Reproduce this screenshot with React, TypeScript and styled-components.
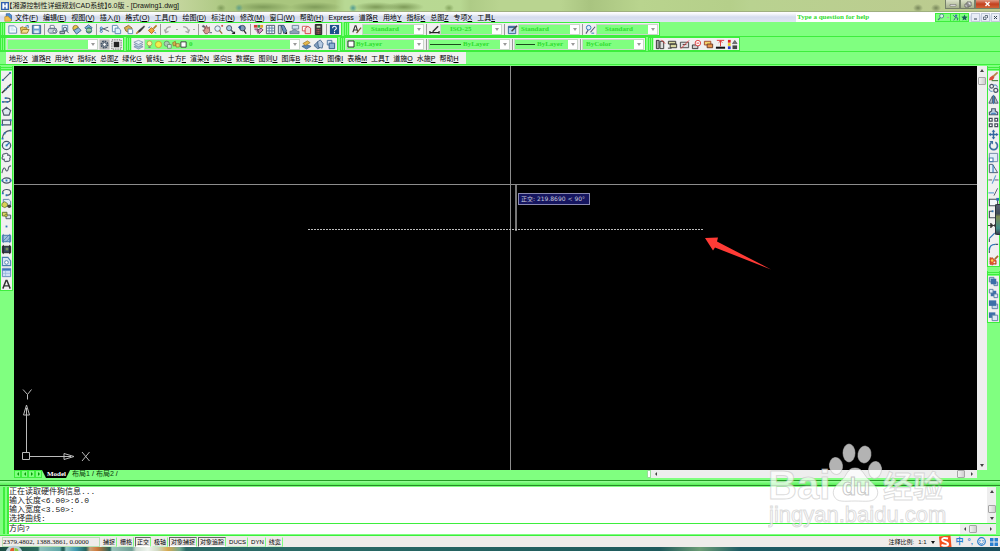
import React from 'react';
import styled, { createGlobalStyle, css } from 'styled-components';

const GREEN = '#80ff80';
const LINE = '#3dee3d';
const TEXT_GREEN = '#2fdc2f';
const PANEL = '#f0f0f0';
const SANS = '"Liberation Sans", "Noto Sans CJK SC", sans-serif';
const SERIF = '"Liberation Serif", "Noto Sans CJK SC", serif';
const MONO = '"Liberation Mono", "Noto Sans CJK SC", monospace';

const GlobalStyle = createGlobalStyle`
  * { box-sizing: border-box; }
  body { margin: 0; font-family: ${SANS}; background: ${GREEN}; }
  button, input, select { font: inherit; color: inherit; margin: 0; padding: 0; border: 0; background: none; border-radius: 0; outline: 0; }
`;

/* ---------- icons ---------- */

const S = '#4a5568';
const B = '#2f74b5';

const icons: Record<string, React.ReactNode> = {
  new: <><path d="M2 2h6l2.500 2.500V10H2z" fill="#f4faff" stroke="#5a87b0" /><path d="M4 4.500h3M4 6.500h5" stroke="#b8d4ec" /></>,
  open: <><path d="M1.500 4l3-1 1 1h3v5h-6z" fill="#e8c35a" stroke="#9c7a2b" /><path d="M2 10l2-4h7l-2 4z" fill="#f7dd8a" stroke="#9c7a2b" /><path d="M7 2.500l3-1v3" fill="none" stroke={B} /></>,
  save: <><path d="M1.500 1.500h9v9h-9z" fill="#6f9fd0" stroke="#3c618c" /><path d="M3.500 2h5v3h-5z" fill="#fff" /><path d="M3.500 7h5v3h-5z" fill="#dfe9f3" /></>,
  print: <><path d="M3.500 1.500h4l1 3h-5z" fill="#fff" stroke="#6f7d92" /><path d="M2 5h8l1 3-1 2H3L1 8z" fill="#c6cfdd" stroke="#5f6b84" /><circle cx="8" cy="8" r="1.500" fill="#fff" stroke="#5f6b84" /></>,
  preview: <><path d="M3.500 1.500h6v6h-6z" fill="#eef6ff" stroke="#5a87b0" /><path d="M1 8h5v2.500H1z" fill="#aab4c4" stroke={S} /><circle cx="6.500" cy="5.500" r="2" fill="#cfe4f7" stroke={S} /><path d="M8 7l2.500 3" stroke={S} /></>,
  publish: <><circle cx="5" cy="4.500" r="3" fill="#e9c04c" stroke="#8b7430" /><path d="M3 7l5-3 3 3-5 4z" fill="#8fb7dc" stroke="#3d6287" /></>,
  globe: <><path d="M2 4l4-3 4 3-4 4z" fill="#7fb3dc" stroke="#3d6287" /><circle cx="6.500" cy="7" r="3" fill="#6fae66" stroke="#2f6a88" /><path d="M4 6.500h5" stroke="#d6edff" /></>,
  cut: <><path d="M1 6.500l9-3M4 5l7 3" stroke={S} /><circle cx="2.500" cy="4.500" r="1.200" fill="none" stroke={B} /><circle cx="2.500" cy="8" r="1.200" fill="none" stroke={B} /></>,
  copy: <><path d="M1.500 1.500h5l1 1v6h-6z" fill="#f4faff" stroke="#5a87b0" /><path d="M4.500 4.500h4l2 2v4h-6z" fill="#e0effc" stroke="#5a87b0" /></>,
  paste: <><path d="M1.500 4L6 1.500l4 3-3 5-4-2z" fill="#d9ad53" stroke="#8b6b2c" /><path d="M5.500 5.500h4l1 1v4h-5z" fill="#fff" stroke="#5a87b0" /></>,
  match: <><path d="M1.500 10.500L4 7l6-5 .5 1L6 8z" fill="#333" stroke="#444" strokeWidth=".6" /><path d="M1.500 10.500L3.500 8" stroke="#c98b3a" strokeWidth="1.500" /></>,
  brush: <><path d="M10.500 1.500L7 5" stroke="#b07a2a" strokeWidth="1.800" /><path d="M5 4l3 3-3 3.500L1.500 7z" fill="#f0a93a" stroke="#b3661c" /><path d="M1.500 4l2-1M8 9l2 1" stroke={B} /></>,
  undo: <path d="M3 9.500C2 5 5 3 8.500 3M1.500 6l1.500 3.500L6 8" fill="none" stroke="#a8a8a8" strokeWidth="1.400" />,
  redo: <path d="M9 9.500C10 5 7 3 3.500 3M10.500 6L9 9.500 6 8" fill="none" stroke="#a8a8a8" strokeWidth="1.400" />,
  pan: <><path d="M4 2l1 3 1-3.500L7.500 5 9 3l.5 5L7 10.500H4.500L2 6.500l2 .5z" fill="#d99a92" stroke="#7b4a4a" strokeWidth=".8" /><path d="M1 2.500h3M2.500 1v3M9 9.500h3" stroke={S} /></>,
  zoomrt: <><circle cx="5" cy="5" r="3" fill="#e2f0fb" stroke="#66758a" /><path d="M7 7l3 3.500" stroke="#9a6b35" strokeWidth="1.500" /><path d="M9 2h2M10 1v2" stroke="#b33" /></>,
  zoomwin: <><circle cx="4.500" cy="4.500" r="2.800" fill="#a8c7e4" stroke={S} /><path d="M6.500 6.500l3 3" stroke={S} strokeWidth="1.600" /><path d="M7 11h4V8z" fill="#222" /></>,
  zoomprev: <><circle cx="6" cy="4.500" r="3" fill="#7d97b8" stroke="#38455c" /><path d="M7.500 7l2.500 3.500" stroke="#333" strokeWidth="1.500" /><path d="M1 3.500L4 1v5z" fill="#1d4f91" /></>,
  props: <><path d="M1 1h4v3H1z" fill="#d43c3c" /><path d="M5 1h3v3H5z" fill="#2f9d48" /><path d="M8 1h3v3H8z" fill="#e3a42c" /><path d="M1.500 5.500h4v5M5 6.500l4-2 2 2-4 4z" fill="#d89ac4" stroke="#63405f" /></>,
  design: <><path d="M1.500 1.500h9v9h-9z" fill="#eef4fb" stroke={S} /><path d="M4.500 2v8M2 4.500h8M2 7.500h8M7.500 2v8" stroke="#5f7fa5" /></>,
  palette: <><path d="M1.500 1.500h3v9h-3z" fill="#c8d6e6" stroke={S} /><path d="M4.500 1.500h3l3 6-3 3z" fill="#6f93bf" stroke="#334f75" /><path d="M8 11h3V8z" fill="#222" /></>,
  sheet: <><path d="M3.500 1.500h7v4h-7z" fill="#cfdfee" stroke="#6b7f98" /><path d="M1 8c3 0 3-2 5-2s2 2 5 2v2.500H1z" fill="#8c9fb8" stroke="#56677f" strokeWidth=".7" /></>,
  markup: <><path d="M1.500 2.500h5v5h-5z" fill="#fff" stroke="#c55" /><path d="M4.500 4.500l3-2 3 2v6h-6z" fill="#f6dada" stroke="#d23f3f" /></>,
  calc: <><path d="M2.500.500h7v11h-7z" fill="#423a3a" stroke="#222" /><path d="M4 2h4v2H4z" fill="#b9d6b0" /><path d="M4 6h4M4 8h4M4 10h4" stroke="#c66" strokeDasharray="1 .6" /></>,
  help: <><path d="M1 1h10v10H1z" fill="#1d4f8c" /><path d="M4 4.500c0-3 4-2.500 4 0C8 6 6 5.800 6 7.500M6 8.500V10" fill="none" stroke="#fff" strokeWidth="1.200" /></>,
  textstyle: <><path d="M2 9L4.500 2h1L7.500 9M3 6.500h4" fill="none" stroke="#333" strokeWidth="1.200" /><path d="M6 10l5-6" stroke="#7a5c34" strokeWidth="1.400" /></>,
  dimstyle: <><path d="M1 9.500h10M1 7.500v3M11 7.500v3" stroke="#222" strokeWidth="1.300" /><path d="M4 8.500l6-6" stroke="#333" strokeWidth="1.600" /></>,
  tablestyle: <><path d="M1.500 2.500h8v8h-8z" fill="#b8d3ee" stroke="#33608f" /><path d="M1.500 3.500h8" stroke="#33608f" strokeWidth="1.500" /><path d="M5 8l6-6" stroke="#444" strokeWidth="1.600" /></>,
  leader: <><circle cx="4" cy="4" r="2.500" fill="#e2eefb" stroke={B} /><path d="M1 10.500l2.500-4M6 9l5-6" stroke="#557" strokeWidth="1.200" /><path d="M7 10h3" stroke={B} /></>,
  gear: <><path d="M.500.500h11v11H.500z" fill="#b9b9b9" /><circle cx="6" cy="6" r="3.500" fill="none" stroke="#3f5064" strokeWidth="1.800" strokeDasharray="1.800 .9" /><circle cx="6" cy="6" r="2" fill="#fff" stroke="#3f5064" /></>,
  wsave: <><path d="M1 1h10v10H1z" fill="none" stroke="#555" strokeDasharray="1.500 1" /><path d="M3 3h6v6H3z" fill="#222" /></>,
  layers: <><path d="M1 8.500l5-2 5 2-5 2.500z" fill="#a9bdd4" stroke="#6a83a2" strokeWidth=".7" /><path d="M1 6l5-2 5 2-5 2.500z" fill="#c7d6e6" stroke="#6a83a2" strokeWidth=".7" /><path d="M1 3.500l5-2 5 2L6 6z" fill="#e6eef6" stroke="#6a83a2" strokeWidth=".7" /></>,
  layerprev: <><path d="M1 8l5-2 5 2-5 3z" fill="#5b83b5" stroke="#34567f" strokeWidth=".7" /><path d="M2 5l5-3 3 2-5 3z" fill="#e8b94d" stroke="#94722a" strokeWidth=".7" /></>,
  layerstate: <><path d="M1 7l4-4 2 1v6l-2 .5z" fill="#7f9cbd" stroke="#34567f" strokeWidth=".8" /><path d="M5 3l3-2 3 4-1 5-4-1z" fill="#b7cbe1" stroke="#34567f" strokeWidth=".8" /></>,
  layeriso: <><path d="M2.500 1.500h5v5h-5z" fill="#cfe0f2" stroke="#4d759f" /><path d="M4.500 4.500h6v6h-6z" fill="#8fb1d6" stroke="#2c5687" /></>,
  bulb: <><circle cx="6" cy="4.500" r="3.300" fill="#fff59a" stroke="#a89a3a" /><path d="M4.500 8.500h3v2h-3z" fill="#777" /></>,
  sun: <circle cx="6" cy="6" r="4.200" fill="#f3ee4a" stroke="#b49c2c" />,
  vp: <><circle cx="5" cy="5" r="3.500" fill="#a9c9b2" stroke="#61816a" /><path d="M6 6h5v5H6z" fill="#d6e4d9" stroke="#61816a" /></>,
  lock: <><path d="M1 4l4-2 1 6-4 1z" fill="#d8b04b" stroke="#8b6b24" /><path d="M6 5.500h5v5H6z" fill="#e9cf74" stroke="#8b6b24" /></>,
  swatch: <path d="M1.500 1.500h9v9h-9z" fill="#fff" stroke="#222" strokeWidth="1.400" />,
  t1: <><path d="M2.500 1.500v9M5.500 2.500h4v8h-4z" fill="#ddd" stroke="#333" /><path d="M1.500 1.500h3v9h-3z" fill="#aaa" stroke="#333" /><path d="M7 1l4 4" stroke="#d33" /></>,
  t2: <><path d="M1.500 2.500h8v3h-8zM3.500 5.500h7v4h-7z" fill="#d8d8a0" stroke="#333" /><path d="M1 10h4" stroke="#333" /></>,
  t3: <><path d="M1.500 3.500h9v6h-9zM4 6h4" fill="#ddd" stroke="#444" /><path d="M2 10.500l9-9" stroke="#e03a3a" /></>,
  t4: <><path d="M1.500 6.500h6v4h-6z" fill="#ccc" stroke="#333" /><circle cx="7.500" cy="4.500" r="3" fill="#fff" stroke="#d93333" /><path d="M6 4.500h3" stroke="#d33" /></>,
  t5: <><path d="M1.500 2.500h7v4h-7z" fill="#f2d36a" stroke="#a3452d" /><path d="M4.500 5.500h6v4h-6z" fill="#e8954b" stroke="#6b3a22" /></>,
  t6: <><path d="M2 1.500h8M6 2v6M4 4l2-2 2 2" stroke="#d33" fill="none" /><path d="M1 9.500h10" stroke="#111" strokeWidth="2.200" /></>,
  t7: <><path d="M1 1h3v3H1z" fill="#d22" /><path d="M1 4.500h3v3H1z" fill="#eacb22" /><path d="M1 8h3v3H1z" fill="#2237cc" /><path d="M6 5l2.500-3.500L11 5z" fill="#777" stroke="#333" strokeWidth=".6" /><path d="M6 7h5v4H6z" fill="#444" /></>,

  line: <><path d="M1.500 10.500l9-9" stroke={S} strokeWidth="1.200" /><path d="M1 9h2v2H1zM9 1h2v2H9z" fill={B} /></>,
  xline: <><path d="M1 11L11 1" stroke="#333" strokeWidth="1.600" /><path d="M4 6h2v2H4zM7 3h2v2H7z" fill={B} /></>,
  pline: <><path d="M2 8.500h5c4 0 4-4 0-4H5" fill="none" stroke={S} strokeWidth="1.300" /><path d="M1 7.500h2v2H1zM6 7.500h2v2H6zM4 3.500h2v2H4z" fill={B} /></>,
  polygon: <path d="M6 1.500l4.500 3.500-1.700 5H3.200L1.500 5z" fill="#dfe7ee" stroke={S} strokeWidth="1.300" />,
  rect: <><path d="M1.500 3.500h9v5h-9z" fill="#e8eef4" stroke={S} strokeWidth="1.300" /><path d="M.500 7.500h2v2h-2zM9.500 2.500h2v2h-2z" fill={B} /></>,
  arc: <><path d="M1.500 10.500C2 5 5 2 10.500 1.500" fill="none" stroke={S} strokeWidth="1.300" /><path d="M.700 9.500h2v2h-2zM3 3.700h2v2H3zM9.500.700h2v2h-2z" fill={B} /></>,
  circle: <><circle cx="6" cy="6" r="4.500" fill="#eaf1f8" stroke={S} strokeWidth="1.400" /><path d="M6 6l3-3" stroke={B} strokeWidth="1.200" /><path d="M5 5h2v2H5z" fill={B} /></>,
  cloud: <path d="M4 2c2-1.500 4 0 3.500 1.500C10 3 11 5.500 9.500 7c1 2-1 4-3 3C5 11 3 10 3.500 8 1 8.500.500 6 2 5 1 3.500 2.500 1.500 4 2z" fill="#f1f4f7" stroke="#5b6472" strokeWidth="1.300" />,
  spline: <path d="M1 10c1-6 3-7 4-4s3 1 3-1 1-3 3-3" fill="none" stroke="#5b6472" strokeWidth="1.200" />,
  ellipse: <><ellipse cx="6" cy="6" rx="4.500" ry="2.800" fill="#eaf1f8" stroke={S} strokeWidth="1.300" /><path d="M.500 5h2v2h-2zM9.500 5h2v2h-2zM5 5h2v2H5z" fill={B} /></>,
  earc: <><path d="M2 7C0 2 11 1 10.500 6c0 2-2 3-4.500 3" fill="none" stroke={S} strokeWidth="1.300" /><path d="M1 6h2v2H1zM5 8h2v2H5z" fill={B} /></>,
  insert: <><path d="M2.500 1.500h6l2 2v5h-8z" fill="#dfeaf5" stroke="#5c7ea3" /><path d="M1 6l3-2 3 2v3l-3 1.500L1 9z" fill="#d9cf58" stroke="#5d6b2d" strokeWidth=".8" /><circle cx="9" cy="9" r="2" fill="#444" /></>,
  block: <><path d="M1.500 2.500h5v4h-5z" fill="#dcd467" stroke="#5d6b2d" /><path d="M5.500 5.500h5v4h-5z" fill="#d8dee6" stroke={S} /><circle cx="5.500" cy="6" r="1.500" fill="#c8be45" stroke="#5d6b2d" strokeWidth=".6" /></>,
  point: <path d="M5 5h2v2H5z" fill={B} />,
  hatch: <><path d="M1.500 2.500h9v7h-9z" fill="#9fbfdd" stroke="#3f74a8" /><path d="M2 9l7-7M5 10l5-5M2.500 1v10M9.500 1v10" stroke="#3f74a8" strokeWidth=".8" /></>,
  gradient: <><path d="M1.500 2.500h9v7h-9z" fill="#34435c" stroke="#222" /><path d="M2.500 1v10M9.500 1v10" stroke="#222" /><path d="M5 4h3v3H5z" fill="#7a8a5a" /></>,
  region: <><path d="M1.500 1.500h6l3 4v5h-9z" fill="#d5e5f4" stroke="#4d7eae" strokeWidth="1.200" /><circle cx="6" cy="7" r="2" fill="#fff" stroke="#4d7eae" /></>,
  table: <><path d="M1.500 1.500h9v9h-9z" fill="#cfe0f5" stroke="#5e86b8" /><path d="M1.500 2h9v2h-9z" fill="#3e74bd" /><path d="M2 7h8M5 4v6" stroke="#8fb0da" strokeWidth=".7" /></>,
  mtext: <path d="M2 10.500L5.500 1.500h1L10 10.500M3.500 7.500h5" fill="none" stroke="#333" strokeWidth="1.600" />,

  erase: <><path d="M5 6.500l5.500-5" stroke="#b58a4c" strokeWidth="2" /><path d="M2 7l3-2 2 2-2 3H1z" fill="#d9503c" /><path d="M4 10.500h7" stroke="#467a3c" strokeWidth="1.200" /></>,
  copyobj: <><circle cx="4" cy="3.500" r="2" fill="none" stroke={S} strokeWidth="1.300" /><circle cx="8.500" cy="8" r="2.200" fill="none" stroke={S} strokeWidth="1.300" /><path d="M1 6c1 4 3 3 4 3M6 2.500c4-1 4 1 4 2.500" fill="none" stroke={B} /></>,
  mirror: <><path d="M5 2v8H1zM7 2v8h4z" fill="#aebccc" stroke={S} /><path d="M6 1v10" stroke={B} /></>,
  offset: <><path d="M1.500 9.500V7L4 5.500V3h4v2.500L10.500 7v2.500z" fill="#b9cbe0" stroke={S} strokeWidth="1.200" /><path d="M4 9.500V8h4v1.500" stroke={B} fill="none" /></>,
  array: <path d="M1.500 1.500h3v3h-3zM7.500 1.500h3v3h-3zM1.500 7.500h3v3h-3zM7.500 7.500h3v3h-3z" fill="#fff" stroke="#444c5a" strokeWidth="1.300" />,
  move: <path d="M6 .500l2 2.500H6.800v2.200H9V4l2.500 2L9 8V6.800H6.800V9H8l-2 2.500L4 9h1.200V6.800H3V8L.500 6 3 4v1.200h2.200V3H4z" fill="#3568a0" />,
  rotate: <><path d="M3.500 3A4.200 4.200 0 1 0 8 2.500" fill="none" stroke="#3f6f9f" strokeWidth="1.800" /><path d="M1.500 1h4v4z" fill="#3f6f9f" /></>,
  scale: <><path d="M1.500 1.500h9v9h-9z" fill="#e3edf7" stroke="#7088a3" /><path d="M1.500 6.500h4v4h-4z" fill="#fff" stroke="#4d7eae" strokeWidth="1.200" /></>,
  stretch: <><path d="M1.500 1.500H5l5.500 9h-9z" fill="#e3edf7" stroke={S} /><path d="M5.500 2v8.500" stroke={B} strokeWidth="1.200" /></>,
  trim: <><path d="M.500 6.500h4M7 6.500h4.500" stroke={S} /><path d="M4.500 10.500l4-9" stroke="#5b9ad0" strokeWidth="1.200" /></>,
  extend: <><path d="M.500 7.500h6" stroke="#5b9ad0" strokeWidth="1.200" /><path d="M6.500 10.500l4-8" stroke={S} /></>,
  breakpt: <><path d="M1.500 2.500h9v7h-9z" fill="#f3f6fa" stroke="#444c5a" strokeWidth="1.200" /><path d="M9 1h3v3H9z" fill={B} /></>,
  break: <><path d="M5 2.500H1.500v7H8M8.500 2.500h2v3" fill="none" stroke="#444c5a" strokeWidth="1.200" /><path d="M4 1.500h2v2H4z" fill={B} /></>,
  join: <path d="M0 6h12M3 3.500L5.500 6 3 8.500zM9 3.500L6.500 6 9 8.500z" fill="#333" stroke="#333" />,
  chamfer: <><path d="M1.500 11V7M7 1.500h4" stroke={S} strokeWidth="1.200" /><path d="M1.500 7L7 1.500" stroke={B} strokeWidth="1.400" /></>,
  fillet: <><path d="M1.500 11V8M8 1.500h3" stroke={S} strokeWidth="1.200" /><path d="M1.500 8c0-4 2-6.500 6.500-6.500" fill="none" stroke={B} strokeWidth="1.400" /></>,
  explode: <><path d="M11 1L7.500 4.500" stroke="#a56b2a" strokeWidth="1.800" /><path d="M2 3h3l1 1 3 2v4H6l-1 1-3-1z" fill="#e0562e" stroke="#8c3a1c" strokeWidth=".6" strokeDasharray="1.500 .5" /><circle cx="4.500" cy="6" r="1.300" fill="#f7d24a" /><circle cx="7" cy="8" r="1" fill="#f2ede2" /></>,
  front: <><path d="M1.500 1.500h5v5h-5zM6.500 6.500h4v4h-4z" fill="#b8cde3" stroke="#5c7ea3" /><path d="M3 3h6v6H3z" fill="#3c6fa8" /></>,
  back: <><path d="M3 3h6v6H3z" fill="#3c6fa8" /><path d="M1.500 1.500h4v4h-4zM6.500 6.500h4v4h-4z" fill="#dce8f4" stroke="#5c7ea3" /></>,
  above: <><path d="M4.500 5.500h6v5h-6z" fill="#c7d8ea" stroke="#5c7ea3" /><path d="M1 1.500h8v6H1z" fill="#3c6fa8" /></>,
  under: <><path d="M1 1.500h7v6H1z" fill="#3c6fa8" /><path d="M4.500 4.500h6v6h-6z" fill="#dce8f4" stroke="#5c7ea3" /></>,

  search: <><circle cx="7" cy="4.500" r="3" fill="#d8f2e4" stroke="#3f7f7f" strokeWidth="1.200" /><path d="M5 7l-3.500 3.500" stroke="#3f7f7f" strokeWidth="1.600" /></>,
  comm: <><circle cx="7" cy="3" r="2" fill="#3f6fae" /><path d="M2 2l4 4-3 5M6 6l4 1-1 4" stroke="#2f5f7f" strokeWidth="1.500" fill="none" /></>,
  star: <path d="M6 .800l1.600 3.500 3.900.400-2.900 2.600.800 3.900L6 9.200l-3.400 2 .8-3.900L.500 4.700l3.900-.400z" fill="#17605a" />,
  app: <><path d="M0 0h12v12H0z" fill="#2f5fae" /><path d="M2 2h3v3h2V2h3v8H7V7H5v3H2z" fill="#fff" /></>,
  dwg: <><path d="M3 1h5l2 2v7H3z" fill="#4f8fcf" stroke="#2f5f9a" /><path d="M1 5l4-1 5 5-1 2H1z" fill="#f2c04a" stroke="#a87a22" strokeWidth=".7" /></>,
};

const Glyph = styled.svg`
  display: block;
  flex: none;
`;

const Icon = ({ name, size = 11 }: { name: string; size?: number }) => (
  <Glyph width={size} height={size} viewBox="0 0 12 12" aria-hidden="true">{icons[name]}</Glyph>
);

/* ---------- shell ---------- */

const Shell = styled.div`
  position: relative;
  display: flex;
  flex-direction: column;
  height: 100vh;
  overflow: hidden;
  background: ${GREEN};
`;

const TitleBar = styled.header`
  display: flex;
  align-items: center;
  height: 12px;
  flex: none;
  padding-left: 1px;
  border-bottom: 1px solid #9fb080;
  background:
    radial-gradient(4px 4px at 239px 8px, #5fa08a, transparent),
    radial-gradient(4px 4px at 353px 8px, #4f9a92, transparent),
    radial-gradient(30px 5px at 263px 7px, #7f9c5a, transparent),
    radial-gradient(26px 5px at 315px 7px, #7f9c5a, transparent),
    radial-gradient(22px 5px at 376px 7px, #7d9a58, transparent),
    radial-gradient(20px 5px at 404px 7px, #7d9a58, transparent),
    radial-gradient(5px 4px at 221px 8px, #7f9c5a, transparent),
    radial-gradient(5px 4px at 449px 8px, #86a660, transparent),
    radial-gradient(5px 4px at 918px 8px, #77865a, transparent),
    radial-gradient(5px 4px at 936px 8px, #77865a, transparent),
    linear-gradient(90deg, #dfe6c8 0, #d9e2bd 80px, #c3d59c 180px, #a9c67e 232px, #a9c67e 335px, #b8d994 345px, #b8d892 460px, #aecb86 470px, #b9d490 500px, #b9d490 560px, #a9c480 590px, #b9d48e 640px, #b5cf8a 730px, #b9d290 75%, #bcc98f 100%);
`;

const Title = styled.h1`
  flex: 1;
  margin: 0;
  font-size: 7px;
  font-weight: 400;
  line-height: 10px;
  color: #111;
  white-space: nowrap;
  font-feature-settings: 'halt';
`;

const WindowButtons = styled.div`
  display: flex;
  align-self: flex-start;
  height: 9px;
`;

const WinButton = styled.button<{ $close?: boolean }>`
  display: grid;
  place-items: center;
  width: ${p => (p.$close ? 25 : 15)}px;
  border: 1px solid #75806a;
  border-top: 0;
  background: ${p => (p.$close ? 'linear-gradient(#e09a82, #c3401f 50%, #cf6436)' : 'linear-gradient(#dbe2c8, #a5b08c)')};
`;

const MenuBar = styled.nav`
  display: flex;
  align-items: center;
  flex: none;
  height: 10px;
  padding-left: 4px;
  background: linear-gradient(#fff, #f4f6fb 20%, #d5dcee 50%, #dfe5f3);
`;

const Menus = styled.div`
  display: flex;
  flex: 1;
  gap: 5px;
  padding-left: 2px;
`;

const MenuButton = styled.button`
  font-size: 7px;
  line-height: 9px;
  color: #000;
  white-space: nowrap;
`;

const HelpBox = styled.input`
  width: 139px;
  height: 9px;
  padding-left: 1px;
  background: #fff;
  font-family: ${SERIF};
  font-size: 7px;
  font-weight: 700;
  &::placeholder { color: ${TEXT_GREEN}; opacity: 1; }
`;

const HelpTools = styled.div`
  display: flex;
  height: 9px;
  margin-right: 1px;
  border: 1px solid ${LINE};
  background: ${GREEN};
`;

const HelpButton = styled.button<{ $wide?: boolean }>`
  display: flex;
  align-items: center;
  justify-content: space-evenly;
  width: ${p => (p.$wide ? 14 : 9)}px;
  & + & { border-left: 1px solid ${LINE}; }
`;

const DocButton = styled.button`
  display: grid;
  place-items: center;
  width: 9px;
  height: 9px;
  margin-left: 1px;
  border: 1px solid #c3cbdc;
  background: #e9edf6;
`;

/* ---------- toolbars ---------- */

const ToolRow = styled.div<{ $height: number }>`
  display: flex;
  flex: none;
  gap: 2px;
  height: ${p => p.$height}px;
  border-bottom: 1px solid ${LINE};
`;

const Toolbar = styled.div`
  display: flex;
  align-items: center;
  padding-right: 1px;
  background: ${PANEL};
  border: 1px solid ${LINE};
`;

const Grip = styled.span<{ $wide?: boolean }>`
  align-self: stretch;
  width: ${p => (p.$wide ? 6 : 5)}px;
  flex: none;
  border-left: 1px solid ${GREEN};
  border-right: 1px solid #b9ffb9;
  background: linear-gradient(90deg, ${LINE} 1px, ${GREEN} 1px 2px, ${LINE} 2px 3px, ${GREEN} 3px);
`;

const ToolButton = styled.button<{ $narrow?: boolean }>`
  display: grid;
  place-items: center;
  flex: none;
  width: ${p => (p.$narrow ? 5 : 12)}px;
  height: 12px;
`;

const Divider = styled.span`
  flex: none;
  width: 1px;
  height: 11px;
  margin: 0 1px 0 2px;
  background: #9a9a9a;
`;

const Dot = styled.i`
  width: 2px;
  height: 1px;
  background: #aaa;
`;

const Combo = styled.div<{ $width: number }>`
  position: relative;
  display: flex;
  align-items: center;
  flex: none;
  width: ${p => p.$width}px;
  height: 11px;
  border: 1px solid #c9d6c9;
  background: ${GREEN};
`;

const ComboSelect = styled.select<{ $indent: number }>`
  appearance: none;
  flex: 1;
  min-width: 0;
  height: 9px;
  padding-left: ${p => p.$indent}px;
  font-family: ${SERIF};
  font-size: 7px;
  font-weight: 700;
  line-height: 9px;
  color: ${TEXT_GREEN};
`;

const ComboArrow = styled.span`
  display: grid;
  place-items: center;
  flex: none;
  width: 9px;
  height: 9px;
  background: #fff;
`;

const Sample = styled.span<{ $width: number }>`
  flex: none;
  width: ${p => p.$width}px;
  height: 1px;
  margin-left: 1px;
  background: #1c4b1c;
`;

const Arrow = ({ dir = 'down', color = '#444' }: { dir?: 'down' | 'up' | 'left' | 'right'; color?: string }) => {
  const d = { down: 'M0 1h4L2 4z', up: 'M0 3h4L2 0z', left: 'M3 0v4L1 2z', right: 'M1 0v4l2-2z' }[dir];
  return <Glyph width="4" height="4" viewBox="0 0 4 4"><path d={d} fill={color} /></Glyph>;
};

type ComboProps = { label: string; value?: string; width: number; indent?: number; children?: React.ReactNode };

const ComboBox = ({ label, value = '', width, indent = 2, children }: ComboProps) => (
  <Combo $width={width}>
    {children}
    <ComboSelect aria-label={label} $indent={indent} defaultValue={value}>
      <option>{value}</option>
    </ComboSelect>
    <ComboArrow><Arrow color="#999" /></ComboArrow>
  </Combo>
);

const Tools = ({ names }: { names: string[] }) => (
  <>
    {names.map((n, i) => {
      if (n === '|') return <Divider key={i} />;
      if (n === '.') return <ToolButton key={i} $narrow aria-label="more"><Dot /></ToolButton>;
      return <ToolButton key={i} aria-label={n}><Icon name={n} /></ToolButton>;
    })}
  </>
);

const PlanMenu = styled.nav`
  display: flex;
  align-items: center;
  gap: 4px;
  margin-left: 6px;
  padding: 0 8px 0 3px;
  background: ${PANEL};
`;

/* ---------- work area ---------- */

const WorkArea = styled.main`
  display: flex;
  flex: 1;
  min-height: 0;
  padding-top: 1px;
`;

const SideColumn = styled.aside<{ $width: number }>`
  flex: none;
  width: ${p => p.$width}px;
`;

const SideBar = styled.div<{ $height: number }>`
  display: flex;
  flex-direction: column;
  width: 13px;
  height: ${p => p.$height}px;
  margin-bottom: 4px;
  border: 1px solid ${LINE};
  border-top: 0;
  background: ${PANEL};
`;

const SideGrip = styled.span`
  flex: none;
  height: 5px;
  background: linear-gradient(${GREEN} 1px, ${LINE} 1px 2px, ${GREEN} 2px 3px, ${LINE} 3px 4px, ${GREEN} 4px);
`;

const SideButton = styled.button`
  display: grid;
  place-items: center;
  flex: 1;
  min-height: 0;
`;

const Center = styled.section`
  display: flex;
  flex: 1;
  flex-direction: column;
  min-width: 0;
`;

const DrawingRow = styled.div`
  display: flex;
  flex: 1;
  min-height: 0;
`;

const Canvas = styled.div`
  position: relative;
  flex: 1;
  background: #000;
  overflow: hidden;
`;

const Drawing = styled.svg`
  position: absolute;
  inset: 0;
  width: 100%;
  height: 100%;
`;

const Ucs = styled.svg`
  position: absolute;
  left: 6px;
  bottom: 6px;
`;

const Tip = styled.div`
  position: absolute;
  left: 504px;
  top: 127px;
  padding: 0 4px 0 2px;
  border: 1px solid #8a8ab0;
  background: #15155f;
  color: #c9c9dc;
  font-family: "DejaVu Sans", "Noto Sans CJK SC", sans-serif;
  font-size: 6px;
  line-height: 10px;
  white-space: nowrap;
`;

const scroll = css`
  display: flex;
  align-items: center;
  justify-content: space-between;
  flex: none;
  background: #eee;
`;

const VScroll = styled.div<{ $width: number }>`
  ${scroll}
  flex-direction: column;
  width: ${p => p.$width}px;
  padding: 3px 0;
`;

const HScroll = styled.div<{ $width?: number }>`
  ${scroll}
  ${p => (p.$width ? `width: ${p.$width}px;` : 'flex: 1;')}
  padding: 0 3px;
`;

const Thumb = styled.span`
  width: 8px;
  height: 8px;
  border: 1px solid #a5a5a5;
  border-radius: 1px;
  background: linear-gradient(90deg, #f3f3f3, #cfcfcf);
`;

const ThumbGap = styled.span<{ $grow: number }>`
  flex: ${p => p.$grow};
`;

const TabRow = styled.div`
  display: flex;
  flex: none;
  height: 8px;
  margin-bottom: 2px;
  padding-right: 10px;
  font-size: 7px;
  line-height: 8px;
`;

const TabNav = styled.button`
  display: grid;
  place-items: center;
  width: 7px;
  border: 1px solid ${LINE};
`;

const Tabs = styled.div`
  display: flex;
  width: 608px;
  flex: none;
`;

const Tab = styled.button<{ $active?: boolean }>`
  color: ${p => (p.$active ? '#fff' : '#0a3a0a')};
  background: ${p => (p.$active ? '#000' : 'none')};
  clip-path: ${p => (p.$active ? 'polygon(0 0, 100% 0, calc(100% - 4px) 100%, 4px 100%)' : 'none')};
  padding: ${p => (p.$active ? '0 4px 0 5px' : '0 2px')};
  font-family: ${p => (p.$active ? SERIF : SANS)};
  font-weight: ${p => (p.$active ? 700 : 400)};
`;

const TabHandle = styled.span`
  width: 4px;
  background: #fff;
  border: 1px solid #9d9;
`;

/* ---------- command window and status bar ---------- */

const Command = styled.section`
  display: flex;
  flex-direction: column;
  flex: none;
  margin: 1px 4px 0 3px;
  border-left: 6px double ${LINE};
`;

const Splitter = styled.div`
  flex: none;
  height: 6px;
  border-top: 1px solid #259c25;
  border-bottom: 1px solid #2a8a2a;
  background: linear-gradient(#98ff98, #55f055);
`;

const HistoryRow = styled.div`
  display: flex;
  height: 36px;
  background: #fff;
`;

const History = styled.pre`
  flex: 1;
  margin: 0;
  font-family: ${MONO};
  font-size: 8px;
  line-height: 9px;
  color: #222;
`;

const PromptRow = styled.div`
  display: flex;
  height: 11px;
  border-top: 1px solid ${LINE};
`;

const PromptLabel = styled.label`
  display: flex;
  flex: 1;
  align-items: center;
  background: #fff;
  font-family: ${MONO};
  font-size: 8px;
  line-height: 10px;
  color: #222;
`;

const PromptInput = styled.input`
  flex: 1;
  height: 9px;
`;

const StatusBar = styled.footer`
  display: flex;
  align-items: center;
  flex: none;
  gap: 1px;
  height: 12px;
  margin-top: 1px;
  padding: 0 2px;
  border-top: 1px solid ${LINE};
  background: #efecea;
  font-size: 6px;
`;

const Coordinates = styled.output`
  width: 98px;
  height: 10px;
  border: 1px solid #b5e0b5;
  font-family: ${SERIF};
  font-size: 7px;
  line-height: 8px;
  color: #111;
  white-space: nowrap;
`;

const Toggle = styled.button<{ $on?: boolean }>`
  height: 10px;
  padding: 0 1px;
  border: 1px solid ${p => (p.$on ? '#666' : 'transparent')};
  border-right-color: ${GREEN};
  border-bottom-color: ${p => (p.$on ? '#fff' : '#c9efc9')};
  color: #000;
  line-height: 8px;
  white-space: nowrap;
`;

const ScaleText = styled.label`
  display: flex;
  align-items: center;
  gap: 4px;
  margin-left: auto;
  color: #111;
`;

const Ime = styled.div`
  display: flex;
  align-items: center;
  gap: 4px;
  margin-left: 2px;
  color: #2a7fd0;
  font-size: 8px;
  line-height: 10px;
  font-weight: 700;
`;

const Taskbar = styled.div`
  position: relative;
  flex: none;
  height: 4px;
  background: linear-gradient(90deg, #1c4d44 0, #2d6b5f 38px, #8fc0bc 40px, #5fa8a8 60px, #26625a 62px, #26625a 64px, #8cc4c0 66px, #3f9ab0 76px, #26625a 86px, #c9a077 90px, #d07a3a 97px, #26625a 110px, #9ac4bc 112px, #6f9f94 132px, #cfdcd2 136px, #eef4ee 148px, #cfd8c0 158px, #d8a94f 168px, #6fa890 180px, #2b6a66 186px, #2b6a66 30%, #1f5a5c 66%, #6d9d76 70%, #1f5c64 74%, #1c4e5c 100%);
`;

const Orb = styled.svg`
  position: absolute;
  left: 6px;
  bottom: 0;
`;

const EdgeWidget = styled.div`
  position: absolute;
  right: 0;
  top: 204px;
  width: 5px;
  height: 31px;
  border: 1px solid #2c333c;
  border-right: 0;
  border-radius: 2px 0 0 2px;
  background: linear-gradient(#56606c, #3f4b58 30%, #7a8a50 40%, #3f8f8a 80%, #39434e);
`;

const Watermark = styled.svg`
  position: absolute;
  right: 50px;
  bottom: 18px;
  pointer-events: none;
`;

const menus = ['文件(F)', '编辑(E)', '视图(V)', '插入(I)', '格式(O)', '工具(T)', '绘图(D)', '标注(N)', '修改(M)', '窗口(W)', '帮助(H)', 'Express', '道路R', '用地Y', '指标K', '总图Z', '专项X', '工具L'];
const planMenus = ['地形X', '道路R', '用地Y', '指标K', '总图Z', '绿化G', '管线L', '土方F', '渲染N', '竖向S', '数据E', '图则U', '图库B', '标注D', '图像I', '表格M', '工具T', '道施O', '水施P', '帮助H'];
const standard = ['new', 'open', 'save', '|', 'print', 'preview', 'publish', 'globe', '|', 'cut', 'copy', 'paste', 'match', 'brush', '|', 'undo', '.', 'redo', '.', '|', 'pan', 'zoomrt', 'zoomwin', 'zoomprev', '|', 'props', 'design', 'palette', 'sheet', 'markup', 'calc', '|', 'help'];
const draw = ['line', 'xline', 'pline', 'polygon', 'rect', 'arc', 'circle', 'cloud', 'spline', 'ellipse', 'earc', 'insert', 'block', 'point', 'hatch', 'gradient', 'region', 'table', 'mtext'];
const modify = ['erase', 'copyobj', 'mirror', 'offset', 'array', 'move', 'rotate', 'scale', 'stretch', 'trim', 'extend', 'breakpt', 'break', 'join', 'chamfer', 'fillet', 'explode'];
const order = ['front', 'back', 'above', 'under'];
const toggles: [string, boolean][] = [['捕捉', false], ['栅格', false], ['正交', true], ['极轴', false], ['对象捕捉', true], ['对象追踪', true], ['DUCS', false], ['DYN', false], ['线宽', false]];

const withKey = (text: string) => {
  const m = text.match(/^([^A-Z]+)([A-Z])(\)?)$/);
  return m ? <>{m[1]}<u>{m[2]}</u>{m[3]}</> : text;
};

const Side = ({ names, height }: { names: string[]; height: number }) => (
  <SideBar $height={height}>
    <SideGrip />
    {names.map(n => <SideButton key={n} aria-label={n}><Icon name={n} /></SideButton>)}
  </SideBar>
);

export default function App() {
  return (
    <Shell>
      <GlobalStyle />
      <TitleBar>
        <Icon name="app" size={8} />
        <Title>【湘源控制性详细规划CAD系统】6.0版 - [Drawing1.dwg]</Title>
        <WindowButtons>
          <WinButton aria-label="Minimize"><Glyph width="8" height="6"><path d="M1 3.500h6v1.500H1z" fill="#fff" stroke="#555" strokeWidth=".5" /></Glyph></WinButton>
          <WinButton aria-label="Restore"><Glyph width="8" height="7"><path d="M3 1h4v4H3zM1 3h4v3H1z" fill="#eee" stroke="#555" strokeWidth=".8" /></Glyph></WinButton>
          <WinButton $close aria-label="Close"><Glyph width="7" height="6"><path d="M1.500 1l4 4M5.500 1l-4 4" stroke="#fff" strokeWidth="1.400" /></Glyph></WinButton>
        </WindowButtons>
      </TitleBar>
      <MenuBar>
        <Icon name="dwg" size={9} />
        <Menus>{menus.map(m => <MenuButton key={m}>{withKey(m)}</MenuButton>)}</Menus>
        <HelpBox aria-label="Help search" placeholder="Type a question for help" />
        <HelpTools>
          <HelpButton $wide aria-label="Search"><Icon name="search" size={8} /><Dot /></HelpButton>
          <HelpButton aria-label="Communication center"><Icon name="comm" size={7} /></HelpButton>
          <HelpButton aria-label="Favorites"><Icon name="star" size={7} /></HelpButton>
        </HelpTools>
        <DocButton aria-label="Minimize drawing"><Glyph width="5" height="5"><path d="M1 4h3" stroke="#345" /></Glyph></DocButton>
        <DocButton aria-label="Restore drawing"><Glyph width="5" height="5"><path d="M2 .500h2.500V3M.500 2h2.500v2.500H.500z" fill="none" stroke="#456" strokeWidth=".8" /></Glyph></DocButton>
        <DocButton aria-label="Close drawing"><Glyph width="5" height="5"><path d="M1 1l3 3M4 1L1 4" stroke="#345" /></Glyph></DocButton>
      </MenuBar>

      <ToolRow $height={15}>
        <Toolbar>
          <Grip />
          <Tools names={standard} />
        </Toolbar>
        <Toolbar>
          <Grip />
          <ToolButton aria-label="Text style"><Icon name="textstyle" /></ToolButton>
          <ComboBox label="Text style name" value="Standard" width={62} indent={8} />
          <Divider />
          <ToolButton aria-label="Dimension style"><Icon name="dimstyle" /></ToolButton>
          <ComboBox label="Dimension style name" value="ISO-25" width={62} indent={9} />
          <Divider />
          <ToolButton aria-label="Table style"><Icon name="tablestyle" /></ToolButton>
          <ComboBox label="Table style name" value="Standard" width={62} />
          <Divider />
          <ToolButton aria-label="Multileader style"><Icon name="leader" /></ToolButton>
          <ComboBox label="Multileader style name" value="Standard" width={62} indent={8} />
        </Toolbar>
      </ToolRow>

      <ToolRow $height={15}>
        <Toolbar>
          <Grip $wide />
          <ComboBox label="Workspace" width={91} />
          <Tools names={['gear', 'wsave']} />
        </Toolbar>
        <Toolbar>
          <Grip />
          <Tools names={['layers']} />
          <ComboBox label="Layer" value="0" width={156}>
            <Icon name="bulb" size={9} /><Icon name="sun" size={9} /><Icon name="vp" size={9} /><Icon name="lock" size={8} /><Icon name="swatch" size={7} />
          </ComboBox>
          <Tools names={['layerprev', 'layerstate', 'layeriso']} />
        </Toolbar>
        <Toolbar>
          <Grip />
          <ComboBox label="Color" value="ByLayer" width={78} indent={1}><Icon name="swatch" size={8} /></ComboBox>
          <Divider />
          <ComboBox label="Linetype" value="ByLayer" width={82}><Sample $width={31} /></ComboBox>
          <Divider />
          <ComboBox label="Lineweight" value="ByLayer" width={64}><Sample $width={19} /></ComboBox>
          <Divider />
          <ComboBox label="Plot style" value="ByColor" width={62} indent={3} />
        </Toolbar>
        <Toolbar>
          <Grip />
          <Tools names={['t1', 't2', 't3', 't4', 't5', 't6', 't7']} />
        </Toolbar>
      </ToolRow>

      <ToolRow $height={13}>
        <PlanMenu>{planMenus.map(m => <MenuButton key={m}>{withKey(m)}</MenuButton>)}</PlanMenu>
      </ToolRow>

      <WorkArea>
        <SideColumn $width={14}><Side names={draw} height={225} /></SideColumn>
        <Center>
          <DrawingRow>
            <Canvas>
              <Drawing>
                <path d="M496.500 0V1000M0 118.500H2000" stroke="#8c8c8c" />
                <path d="M502 119v46" stroke="#777" strokeWidth="2" />
                <path d="M294 163.500h396" stroke="#bbb" strokeDasharray="2 1" />
                <path d="M691 172l13-.5-1 4L757 203.500l-56-22-2 3z" fill="#ff3b36" />
              </Drawing>
              <Ucs width="72" height="76" stroke="#bbb" fill="none">
                <path d="M2.500 64.500h7v7h-7zM6.500 64V22M10 68.500h34M6.500 17l-3 10h6zM54 68.500l-10-3v6zM6.500 20v7M44 68.500h7" />
                <path d="M3 1.500l4.500 5 4-5M7.500 6.500v5M62 64l7.500 9M69.500 64L62 73" />
              </Ucs>
              <Tip>正交: 219.8690 &lt; 90°</Tip>
            </Canvas>
            <VScroll $width={10}><Arrow dir="up" /><ThumbGap $grow={1} /><Thumb /><ThumbGap $grow={100} /><Arrow /></VScroll>
          </DrawingRow>
          <TabRow>
            <Tabs>
              <TabNav aria-label="First tab"><Arrow dir="left" color="#0a9a0a" /></TabNav>
              <TabNav aria-label="Previous tab"><Arrow dir="left" color="#0a9a0a" /></TabNav>
              <TabNav aria-label="Next tab"><Arrow dir="right" color="#0a9a0a" /></TabNav>
              <TabNav aria-label="Last tab"><Arrow dir="right" color="#0a9a0a" /></TabNav>
              <Tab $active>Model</Tab>
              <Tab>布局1</Tab>/<Tab>布局2</Tab>/
            </Tabs>
            <ThumbGap $grow={1} />
            <TabHandle />
            <HScroll $width={326}><Arrow dir="left" /><ThumbGap $grow={60} /><Thumb /><ThumbGap $grow={1} /><Arrow dir="right" /></HScroll>
          </TabRow>
        </Center>
        <SideColumn $width={13}>
          <Side names={modify} height={201} />
          <Side names={order} height={52} />
        </SideColumn>
      </WorkArea>

      <Splitter />
      <Command>
        <HistoryRow>
          <History>{'正在读取硬件狗信息...\n输入长度<6.00>:6.0\n输入宽度<3.50>:\n选择曲线:'}</History>
          <VScroll $width={9}><Arrow dir="up" /><ThumbGap $grow={3} /><Thumb /><ThumbGap $grow={1} /><Arrow /></VScroll>
        </HistoryRow>
        <PromptRow>
          <PromptLabel>方向?<PromptInput /></PromptLabel>
          <HScroll $width={36}><Arrow dir="left" /><ThumbGap $grow={1} /><Thumb /><ThumbGap $grow={5} /><Arrow dir="right" /></HScroll>
        </PromptRow>
      </Command>

      <StatusBar>
        <Coordinates>2379.4802, 1388.3861, 0.0000</Coordinates>
        {toggles.map(([t, on]) => <Toggle key={t} $on={on} aria-pressed={on}>{t}</Toggle>)}
        <ScaleText>注释比例: <span>1:1</span><Arrow color="#111" /></ScaleText>
        <Ime>
          <Glyph width="14" height="14" viewBox="0 0 14 14"><path d="M1 1.500L12.500.500l1 11.500L2 13.500z" fill="#f4511e" /><path d="M10 3.500C6 2.500 4 3 4.200 5S10 6.500 10 9s-3.500 2-6.500 1" fill="none" stroke="#fff" strokeWidth="2" /></Glyph>
          <span>中</span>
          <span>°,</span>
          <Glyph width="9" height="9"><circle cx="4.500" cy="4.500" r="3.800" fill="none" stroke="#2a7fd0" strokeWidth="1.200" /><path d="M3 3v1.500M6 3v1.500M2.500 5.500c1 2 3 2 4 0" fill="none" stroke="#2a7fd0" /></Glyph>
          <Glyph width="8" height="8"><path d="M0 0h3.500v3.500H0zM4.500 0H8v3.500H4.500zM0 4.500h3.500V8H0zM4.500 4.500H8V8H4.500z" fill="#2a7fd0" /></Glyph>
        </Ime>
      </StatusBar>
      <Taskbar>
        <Orb width="16" height="6"><path d="M0 6C2-1 14-1 16 6z" fill="#b9cfd8" /><path d="M4 6c0-3 3-4 4-3v3z" fill="#e2592b" /><path d="M8.500 3c2 0 4 1 4 3h-4z" fill="#8cc63f" /></Orb>
      </Taskbar>

      <EdgeWidget />
      <Watermark width="182" height="92" fill="#fff" fillOpacity=".7" stroke="#bdbdbd" strokeOpacity=".55" fontFamily={SANS}>
        <ellipse cx="68" cy="25" rx="6.500" ry="8.500" transform="rotate(-8 68 25)" />
        <ellipse cx="81" cy="12" rx="6" ry="9" />
        <ellipse cx="96.500" cy="13.500" rx="6.500" ry="8.500" transform="rotate(10 96.500 13.500)" />
        <ellipse cx="107" cy="29" rx="6.500" ry="8.500" transform="rotate(8 107 29)" />
        <path d="M87 27c8 0 9 8 15 13 7 6 9 10 7 15-3 7-12 5-22 5s-18 2-21-5c-2-5 0-9 7-15 6-5 6-13 14-13z" />
        <text x="0" y="58" fontSize="40" fontWeight="700">Bai</text>
        <text x="74" y="54" fontSize="23" fontWeight="700" stroke="#999">du</text>
        <text x="115" y="56" fontSize="30" fontWeight="700">经验</text>
        <text x="1" y="81" fontSize="22">jingyan.baidu.com</text>
      </Watermark>
    </Shell>
  );
}
